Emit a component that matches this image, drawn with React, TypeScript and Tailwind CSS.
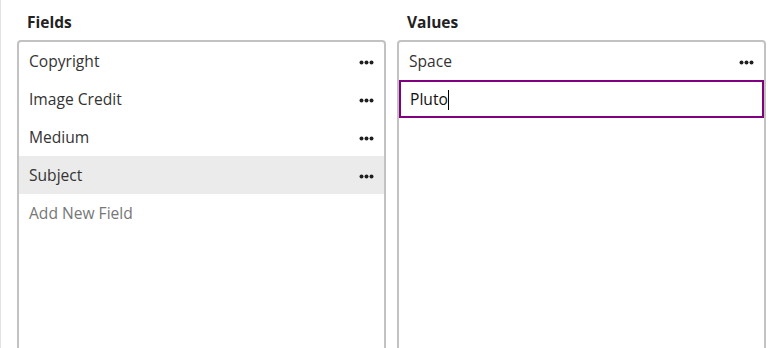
import React from 'react';

function Dots() {
	return (
		<svg width="15" height="5" viewBox="0 0 15 5" className="shrink-0">
			<circle cx="2.5" cy="2.5" r="2" fill="#1f1f1f" />
			<circle cx="7.5" cy="2.5" r="2" fill="#1f1f1f" />
			<circle cx="12.5" cy="2.5" r="2" fill="#1f1f1f" />
		</svg>
	);
}

function Row({ label, active }: { label: string; active?: boolean }) {
	return (
		<div className={`h-[38px] flex items-center justify-between pt-[2px] pl-[10px] pr-[10px] ${active ? 'bg-[#ebebeb]' : ''}`}>
			<span className="text-[15.6px] text-[#333333]">{label}</span>
			<Dots />
		</div>
	);
}

export default function App() {
	const fields = ['Copyright', 'Image Credit', 'Medium', 'Subject'];

	return (
		<div
			className="h-[348px] w-[771px] overflow-hidden bg-white border-l border-[#e2e2e2]"
			style={{ fontFamily: '"Open Sans", "Noto Sans", sans-serif' }}
		>
			<div className="flex gap-[11px] pl-[16px] pr-[5px]">
				<div className="w-[369px]">
					<h2 className="pt-[12px] pl-[10px] h-[40px] text-[15.5px] leading-5 font-bold text-[#222222]">Fields</h2>
					<div className="h-[330px] border-2 border-[#c2c2c2] rounded-[4px]">
						{fields.map((f) => (
							<Row key={f} label={f} active={f === 'Subject'} />
						))}
						<div className="h-[38px] flex items-center pt-[2px] pl-[10px] text-[15.6px] text-[#777777]">Add New Field</div>
					</div>
				</div>
				<div className="w-[369px]">
					<h2 className="pt-[12px] pl-[10px] h-[40px] text-[15.5px] leading-5 font-bold text-[#222222]">Values</h2>
					<div className="h-[330px] border-2 border-[#c2c2c2] rounded-[4px]">
						<Row label="Space" />
						<div className="h-[38px] border-2 border-[#800080] flex items-center pt-[2px] pl-[9px]">
							<span className="text-[15.6px] text-[#111111]">Pluto</span>
							<span className="w-px h-[20px] bg-black" />
						</div>
					</div>
				</div>
			</div>
		</div>
	);
}
